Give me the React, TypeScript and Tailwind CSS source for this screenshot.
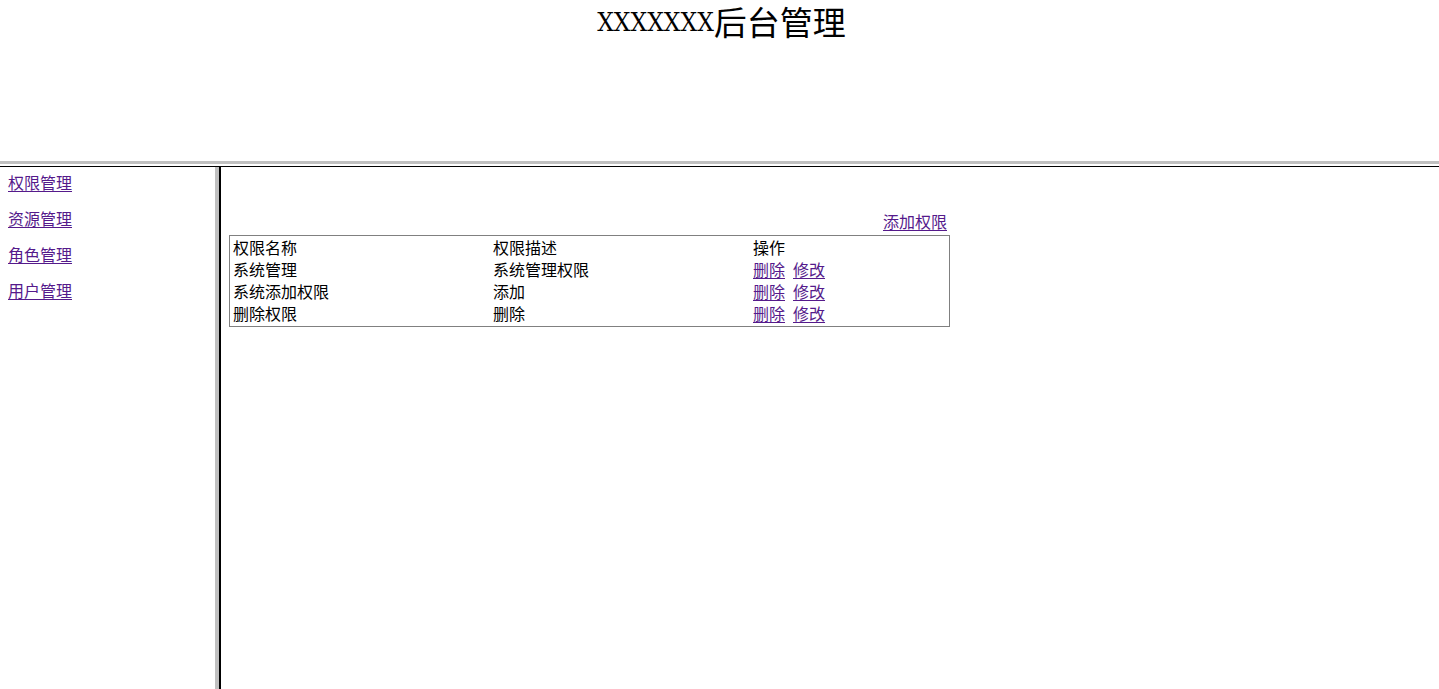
const menu = ['权限管理', '资源管理', '角色管理', '用户管理']

const rows = [
   { name: '系统管理', desc: '系统管理权限' },
   { name: '系统添加权限', desc: '添加' },
   { name: '删除权限', desc: '删除' },
]

const link = 'text-[#551a8b] underline underline-offset-[2px]'
const cell = 'px-px pt-0 pb-[2px]'

export default function App() {
   return (
      <div className="flex h-[689px] w-full flex-col overflow-hidden bg-white font-['Noto_Sans_CJK_SC',sans-serif] text-[16px] text-black">
         <Header />
         <div className="h-[3px] w-full bg-[#c0c0c0]" />
         <div className="h-[2px] w-full bg-white" />
         <div className="h-px w-full bg-black" />
         <div className="flex min-h-0 flex-1">
            <Sidebar />
            <div className="w-[4px] bg-[#c0c0c0]" />
            <div className="w-[2px] bg-black" />
            <Main />
         </div>
      </div>
   )
}

function Header() {
   return (
      <div className="h-[161px] w-full pl-[4px]">
         <h1 className="text-center text-[33px] leading-[42px] font-normal">
            <span className="align-[4px] font-['DejaVu_Serif_Condensed','DejaVu_Serif',serif] text-[26px] font-stretch-condensed">
               XXXXXXX
            </span>
            后台管理
         </h1>
      </div>
   )
}

function Sidebar() {
   return (
      <nav className="flex w-[215px] flex-col gap-[18px] px-2 pt-[6px]">
         {menu.map((item) => (
            <a key={item} href="#" className={`self-start leading-[18px] ${link}`}>
               {item}
            </a>
         ))}
      </nav>
   )
}

function Main() {
   return (
      <div className="flex-1 px-2 pt-[45px]">
         <div className="w-[721px] pr-[3px] pb-[2px] text-right leading-[18px]">
            <a href="#" className={link}>
               添加权限
            </a>
         </div>
         <div className="mt-[3px] grid w-[721px] grid-cols-[258px_258px_1fr] gap-[2px] border border-[#808080] p-[2px] leading-[18px]">
            <div className={cell}>权限名称</div>
            <div className={cell}>权限描述</div>
            <div className={cell}>操作</div>
            {rows.map((r) => (
               <Row key={r.name} {...r} />
            ))}
         </div>
      </div>
   )
}

function Row({ name, desc }: { name: string; desc: string }) {
   return (
      <>
         <div className={cell}>{name}</div>
         <div className={cell}>{desc}</div>
         <div className={`flex gap-2 ${cell}`}>
            <a href="#" className={link}>
               删除
            </a>
            <a href="#" className={link}>
               修改
            </a>
         </div>
      </>
   )
}
